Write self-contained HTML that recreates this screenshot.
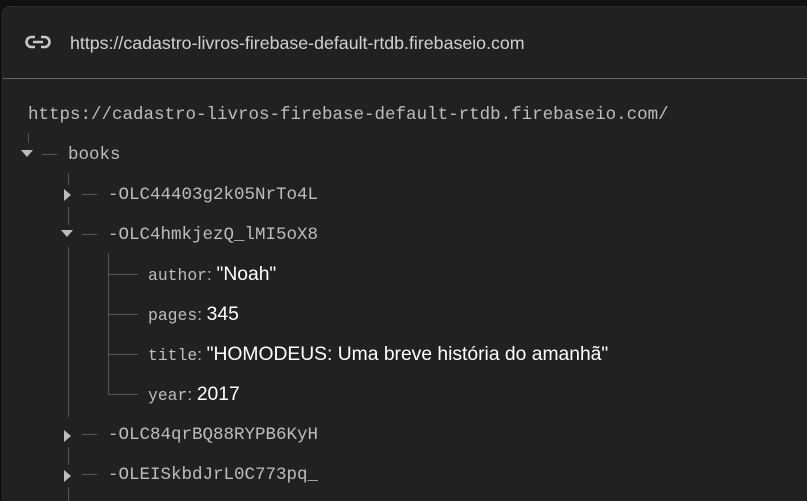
<!DOCTYPE html>
<html><head><meta charset="utf-8"><style>
html,body{margin:0;padding:0;width:807px;height:501px;overflow:hidden;background:#111;position:relative;}
#p{position:absolute;left:2px;top:6px;width:804px;height:494px;background:#212121;border:1px solid #2c2c2c;border-bottom:none;border-right:none;border-radius:8px 0 0 0;}
.a{position:absolute;white-space:nowrap;}
.m{font-family:"Liberation Mono",monospace;font-size:17.5px;color:#bdbdbd;}
.s{font-family:"Liberation Sans",sans-serif;}
.v{color:#fff;font-family:"Liberation Sans",sans-serif;font-size:19.3px;}
.k{font-family:"Liberation Mono",monospace;font-size:16.4px;color:#bdbdbd;}
.h{position:absolute;height:1px;background:#555;}
.vl{position:absolute;width:1px;background:#555;}
.td{position:absolute;width:0;height:0;border-left:6px solid transparent;border-right:6px solid transparent;border-top:7px solid #bdbdbd;}
.tr{position:absolute;width:0;height:0;border-top:6px solid transparent;border-bottom:6px solid transparent;border-left:7px solid #bdbdbd;}
</style></head><body>
<div id="p"></div>
<svg class="a" style="left:25px;top:35px" width="26" height="14" viewBox="0 0 26 14"><path d="M10 2H6.5a5 5 0 0 0 0 10H10M16 2h3.5a5 5 0 0 1 0 10H16M8 7h10" fill="none" stroke="#c8c8c8" stroke-width="2.6"/></svg>
<div class="a s" style="left:70px;top:33px;font-size:17.8px;color:#d0d0d0">https://cadastro-livros-firebase-default-rtdb.firebaseio.com</div>
<div class="h" style="left:3px;top:78px;width:804px;background:#5f6368"></div>
<div class="a m" style="left:28px;top:105px">https://cadastro-livros-firebase-default-rtdb.firebaseio.com/</div>
<div class="vl" style="left:28px;top:133px;height:10px"></div>
<div class="td" style="left:21px;top:150px"></div>
<div class="h" style="left:42px;top:154px;width:15px"></div>
<div class="a m" style="left:68px;top:145px">books</div>
<div class="vl" style="left:68px;top:173px;height:12px"></div>
<div class="tr" style="left:64px;top:189px"></div>
<div class="h" style="left:82px;top:194px;width:15px"></div>
<div class="a m" style="left:108px;top:185px">-OLC44403g2k05NrTo4L</div>
<div class="vl" style="left:68px;top:207px;height:18px"></div>
<div class="td" style="left:61px;top:230px"></div>
<div class="h" style="left:82px;top:234px;width:15px"></div>
<div class="a m" style="left:108px;top:225px">-OLC4hmkjezQ_lMI5oX8</div>
<div class="vl" style="left:68px;top:247px;height:170px"></div>
<div class="vl" style="left:108px;top:253px;height:141px"></div>
<div class="h" style="left:108px;top:274px;width:30px"></div>
<div class="h" style="left:108px;top:314px;width:30px"></div>
<div class="h" style="left:108px;top:354px;width:30px"></div>
<div class="h" style="left:108px;top:394px;width:30px"></div>
<div class="a" style="left:148px;top:264px"><span class="k">author</span><span class="s" style="color:#bdbdbd;font-size:17px">: </span><span class="v">"Noah"</span></div>
<div class="a" style="left:148px;top:304px"><span class="k">pages</span><span class="s" style="color:#bdbdbd;font-size:17px">: </span><span class="v">345</span></div>
<div class="a" style="left:148px;top:344px"><span class="k">title</span><span class="s" style="color:#bdbdbd;font-size:17px">: </span><span class="v">"HOMODEUS: Uma breve história do amanhã"</span></div>
<div class="a" style="left:148px;top:384px"><span class="k">year</span><span class="s" style="color:#bdbdbd;font-size:17px">: </span><span class="v">2017</span></div>
<div class="tr" style="left:64px;top:430px"></div>
<div class="h" style="left:82px;top:434px;width:15px"></div>
<div class="a m" style="left:108px;top:425px">-OLC84qrBQ88RYPB6KyH</div>
<div class="vl" style="left:68px;top:447px;height:18px"></div>
<div class="tr" style="left:64px;top:470px"></div>
<div class="h" style="left:82px;top:474px;width:15px"></div>
<div class="a m" style="left:108px;top:465px">-OLEISkbdJrL0C773pq_</div>
<div class="vl" style="left:68px;top:487px;height:14px"></div>
</body></html>
